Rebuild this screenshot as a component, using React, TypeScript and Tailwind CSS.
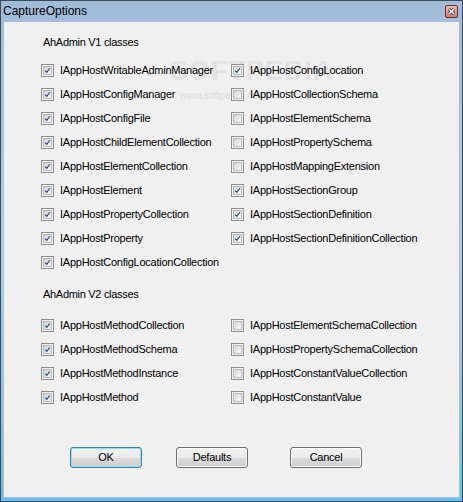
const v1Left = [
  "IAppHostWritableAdminManager",
  "IAppHostConfigManager",
  "IAppHostConfigFile",
  "IAppHostChildElementCollection",
  "IAppHostElementCollection",
  "IAppHostElement",
  "IAppHostPropertyCollection",
  "IAppHostProperty",
  "IAppHostConfigLocationCollection",
];

const v1Right: [string, boolean][] = [
  ["IAppHostConfigLocation", true],
  ["IAppHostCollectionSchema", false],
  ["IAppHostElementSchema", false],
  ["IAppHostPropertySchema", false],
  ["IAppHostMappingExtension", false],
  ["IAppHostSectionGroup", true],
  ["IAppHostSectionDefinition", true],
  ["IAppHostSectionDefinitionCollection", true],
];

const v2Left = [
  "IAppHostMethodCollection",
  "IAppHostMethodSchema",
  "IAppHostMethodInstance",
  "IAppHostMethod",
];

const v2Right = [
  "IAppHostElementSchemaCollection",
  "IAppHostPropertySchemaCollection",
  "IAppHostConstantValueCollection",
  "IAppHostConstantValue",
];

function CheckBox({ checked }: { checked: boolean }) {
  return (
    <div className="w-[13px] h-[13px] shrink-0 border border-[#8e8f8f] bg-[#f4f4f4] p-[1px]">
      <div className="relative w-full h-full border border-[#b9b9b9] bg-gradient-to-br from-[#d4d4d4] to-[#fbfbfb]">
        {checked && (
          <svg viewBox="0 0 9 9" className="absolute inset-0 w-full h-full">
            <path d="M1.6 4.6 L3.6 6.8 L7.4 1.6" fill="none" stroke="#2c4a8f" strokeWidth="1.6" />
          </svg>
        )}
      </div>
    </div>
  );
}

function Row({ label, checked }: { label: string; checked: boolean }) {
  return (
    <div className="h-[24px] flex items-center gap-[6px]">
      <CheckBox checked={checked} />
      <span className="whitespace-nowrap tracking-[-0.25px]">{label}</span>
    </div>
  );
}

function Button({ label, primary }: { label: string; primary?: boolean }) {
  return (
    <div
      className={
        primary
          ? "w-[72px] h-[21px] rounded-[3px] border border-[#3c7fb1] shadow-[inset_0_0_0_1px_#8ee0f8] bg-[linear-gradient(#f2f2f2_0%,#ebebeb_50%,#dddddd_51%,#cfcfcf_100%)] flex items-center justify-center"
          : "w-[72px] h-[21px] rounded-[3px] border border-[#707070] shadow-[inset_0_0_0_1px_#fcfcfc] bg-[linear-gradient(#f2f2f2_0%,#ebebeb_50%,#dddddd_51%,#cfcfcf_100%)] flex items-center justify-center"
      }
    >
      <span className="tracking-[-0.25px]">{label}</span>
    </div>
  );
}

export default function App() {
  return (
    <div className="w-[463px] h-[502px] border border-[#3a4a5c] bg-gradient-to-b from-[#a1bbd9] via-[#b3cce6] to-[#62c3ed] flex flex-col font-['Liberation_Sans',Arial,sans-serif] text-[11px] text-black">
      {/* title bar */}
      <div className="h-[20px] flex items-center justify-between pl-[2px] pr-[4px]">
        <span className="text-[12px] leading-none">CaptureOptions</span>
        <div className="w-[13px] h-[13px] rounded-[2px] border border-[#6b2f2f] bg-gradient-to-b from-[#e9b9b4] to-[#c97f78] flex items-center justify-center">
          <svg viewBox="0 0 9 9" className="w-[9px] h-[9px]">
            <path d="M2 2 L7 7 M7 2 L2 7" stroke="#3b2323" strokeWidth="3" />
            <path d="M2 2 L7 7 M7 2 L2 7" stroke="#ffffff" strokeWidth="1.6" />
          </svg>
        </div>
      </div>

      {/* client area */}
      <div className="relative flex-1 mx-[2px] mb-[3px] bg-[#f0f0f0] border border-[#a9bed3] flex flex-col">
        {/* watermark */}
        <div className="absolute left-[166px] top-[36px] text-[27px] font-bold tracking-[1px] text-[#e3e3e3] leading-none pointer-events-none">
          SOFTPEDIA
        </div>
        <div className="absolute left-[176px] top-[69px] text-[10px] text-[#dedede] leading-none pointer-events-none">
          www.softpedia.com
        </div>

        <div className="relative ml-[39px] mt-[14px] h-[13px] leading-[13px] tracking-[-0.3px]">AhAdmin V1 classes</div>
        <div className="relative ml-[37px] mt-[9px] grid grid-cols-[190px_190px]">
          <div className="flex flex-col">
            {v1Left.map((l) => (
              <Row key={l} label={l} checked />
            ))}
          </div>
          <div className="flex flex-col">
            {v1Right.map(([l, c]) => (
              <Row key={l} label={l} checked={c} />
            ))}
          </div>
        </div>

        <div className="ml-[39px] mt-[14px] h-[13px] leading-[13px] tracking-[-0.3px]">AhAdmin V2 classes</div>
        <div className="ml-[37px] mt-[12px] grid grid-cols-[190px_190px]">
          <div className="flex flex-col">
            {v2Left.map((l) => (
              <Row key={l} label={l} checked />
            ))}
          </div>
          <div className="flex flex-col">
            {v2Right.map((l) => (
              <Row key={l} label={l} checked={false} />
            ))}
          </div>
        </div>

        <div className="flex mt-[38px] ml-[66px]">
          <Button label="OK" primary />
          <div className="ml-[34px]">
            <Button label="Defaults" />
          </div>
          <div className="ml-[42px]">
            <Button label="Cancel" />
          </div>
        </div>
      </div>
    </div>
  );
}
